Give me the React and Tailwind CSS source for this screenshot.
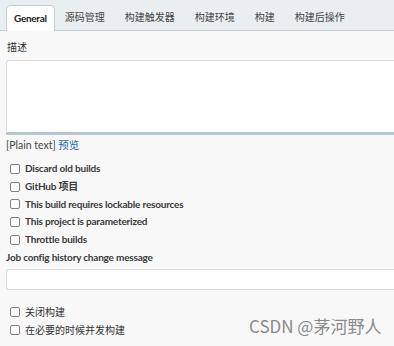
export default function App() {
  const tabs = ["General", "源码管理", "构建触发器", "构建环境", "构建", "构建后操作"];
  const opts = [
    "Discard old builds",
    "GitHub 项目",
    "This build requires lockable resources",
    "This project is parameterized",
    "Throttle builds",
  ];
  const font = { fontFamily: 'Lato, "Noto Sans CJK SC", sans-serif' };

  return (
    <div className="relative w-[394px] h-[346px] overflow-hidden bg-[#f8f8f8] text-[#333]" style={font}>
      {/* tabs */}
      <div className="flex items-end h-[31px] bg-[#e9eef1] border-b border-[#c6cdd2] pl-[6px]">
        {tabs.map((t, i) =>
          i === 0 ? (
            <div
              key={t}
              className="h-[26px] -mb-px px-[7px] flex items-center bg-white border border-b-0 border-[#c6cdd2] rounded-t-[5px] text-[10px] tracking-[-0.3px] font-bold text-[#222]"
            >
              {t}
            </div>
          ) : (
            <div key={t} className="h-[26px] px-[10px] flex items-center text-[10px] text-[#444]">
              {t}
            </div>
          )
        )}
      </div>

      <div className="pl-[6px]">
        <div className="pt-[8px] pl-px text-[10px] text-[#333] leading-[16px]">描述</div>
        <div className="mt-[5px] h-[75px] bg-white border-t border-l border-[#dcdcdc] border-b-[3px] border-b-[#b9c6cd] rounded-tl-[3px]" />
        <div className="mt-[2px] text-[10.5px] leading-[16px] text-[#444]">
          [Plain text] <span className="text-[#1a6aa8]">预览</span>
        </div>

        <div className="mt-[7px] flex flex-col">
          {opts.map((o) => (
            <label key={o} className="flex items-center h-[17.7px] pl-[4px]">
              <span className="w-[10px] h-[10px] border border-[#808080] rounded-[2px] bg-white" />
              <span className="ml-[5px] text-[10px] tracking-[-0.2px] font-bold text-[#3a3a3a]">{o}</span>
            </label>
          ))}
        </div>

        <div className="mt-[1px] text-[10px] tracking-[-0.2px] font-bold leading-[16px] text-[#3a3a3a]">
          Job config history change message
        </div>
        <div className="mt-[4px] h-[21px] bg-white border border-r-0 border-[#dcdcdc] rounded-l-[3px]" />

        <div className="mt-[13px] flex flex-col">
          {["关闭构建", "在必要的时候并发构建"].map((o) => (
            <label key={o} className="flex items-center h-[18px] pl-[4px]">
              <span className="w-[10px] h-[10px] border border-[#808080] rounded-[2px] bg-white" />
              <span className="ml-[5px] text-[10px] text-[#333]">{o}</span>
            </label>
          ))}
        </div>
      </div>

      <div
        className="absolute left-[249px] top-[317px] text-[17px] leading-none text-[#8a8a8a] whitespace-nowrap"
        style={{ fontFamily: '"Noto Sans CJK SC", sans-serif' }}
      >
        CSDN @茅河野人
      </div>
    </div>
  );
}
